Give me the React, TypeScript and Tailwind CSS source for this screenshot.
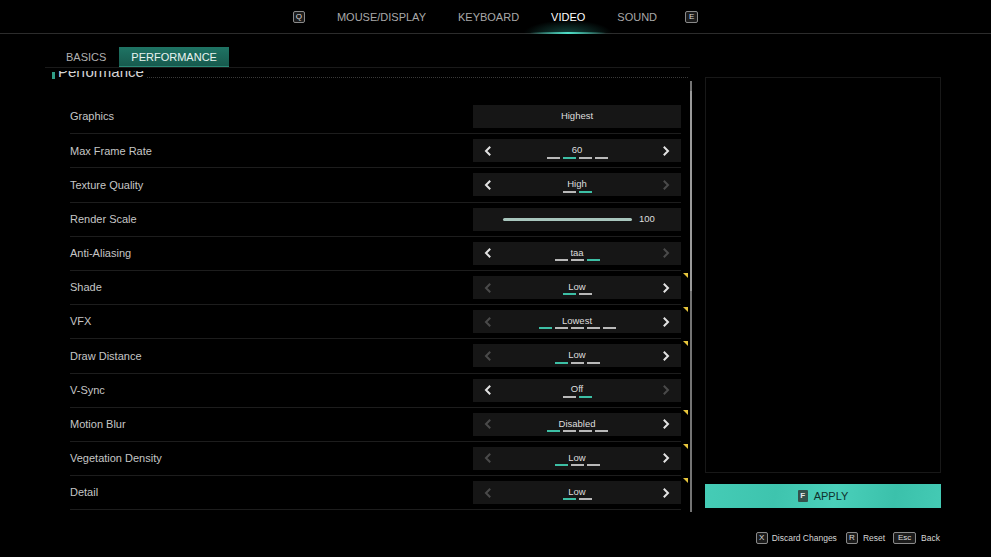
import React from 'react';

type Row = {
  label: string;
  kind: 'plain' | 'select' | 'slider';
  value: string;
  left?: boolean;
  right?: boolean;
  count?: number;
  active?: number;
  flag?: boolean;
};

const rows: Row[] = [
  { label: 'Graphics', kind: 'plain', value: 'Highest' },
  { label: 'Max Frame Rate', kind: 'select', value: '60', left: true, right: true, count: 4, active: 1 },
  { label: 'Texture Quality', kind: 'select', value: 'High', left: true, right: false, count: 2, active: 1 },
  { label: 'Render Scale', kind: 'slider', value: '100' },
  { label: 'Anti-Aliasing', kind: 'select', value: 'taa', left: true, right: false, count: 3, active: 2 },
  { label: 'Shade', kind: 'select', value: 'Low', left: false, right: true, count: 2, active: 0, flag: true },
  { label: 'VFX', kind: 'select', value: 'Lowest', left: false, right: true, count: 5, active: 0, flag: true },
  { label: 'Draw Distance', kind: 'select', value: 'Low', left: false, right: true, count: 3, active: 0, flag: true },
  { label: 'V-Sync', kind: 'select', value: 'Off', left: true, right: false, count: 2, active: 1 },
  { label: 'Motion Blur', kind: 'select', value: 'Disabled', left: false, right: true, count: 4, active: 0, flag: true },
  { label: 'Vegetation Density', kind: 'select', value: 'Low', left: false, right: true, count: 3, active: 0, flag: true },
  { label: 'Detail', kind: 'select', value: 'Low', left: false, right: true, count: 2, active: 0, flag: true },
];

function Chevron({ dir, on }: { dir: 'l' | 'r'; on: boolean }) {
  return (
    <svg width="7" height="10" viewBox="0 0 7 10" className="block">
      <path
        d={dir === 'l' ? 'M5.5 1.5 L2 5 L5.5 8.5' : 'M1.5 1.5 L5 5 L1.5 8.5'}
        fill="none"
        stroke={on ? '#e2e2e2' : '#4a4a4a'}
        strokeWidth="2"
        strokeLinecap="square"
      />
    </svg>
  );
}

function KeyCap({ k, className = '' }: { k: string; className?: string }) {
  return (
    <span
      className={`inline-flex h-[12px] items-center justify-center rounded-[2px] border border-[#8a8a8a] bg-[#1b1b1b] px-[2px] text-[8px] leading-none text-[#dcdcdc] ${className}`}
    >
      {k}
    </span>
  );
}

function Control({ r }: { r: Row }) {
  if (r.kind === 'plain') {
    return (
      <div className="flex h-[23px] w-[208px] items-center justify-center bg-[#161616] text-[9.5px] text-[#dedede]">
        {r.value}
      </div>
    );
  }
  if (r.kind === 'slider') {
    return (
      <div className="flex h-[23px] w-[208px] items-center bg-[#161616] pl-[30px]">
        <div className="h-[3px] w-[129px] rounded-full bg-[#a8c6bd]" />
        <span className="ml-[7px] text-[9.5px] text-[#dedede]">{r.value}</span>
      </div>
    );
  }
  const dashes = Array.from({ length: r.count ?? 0 });
  return (
    <div className="flex h-[23px] w-[208px] items-center justify-between bg-[#161616] px-[11px]">
      <Chevron dir="l" on={!!r.left} />
      <div className="flex flex-col items-center pt-[1px]">
        <span className="text-[9.5px] leading-[11px] text-[#dedede]">{r.value}</span>
        <div className="mt-[1.5px] flex gap-[3px]">
          {dashes.map((_, i) => (
            <span
              key={i}
              className={`block h-[2px] w-[13px] ${i === r.active ? 'bg-[#3dbfa5]' : 'bg-[#b9b9b9]'}`}
            />
          ))}
        </div>
      </div>
      <Chevron dir="r" on={!!r.right} />
    </div>
  );
}

export default function App() {
  const topTabs = ['MOUSE/DISPLAY', 'KEYBOARD', 'VIDEO', 'SOUND'];
  return (
    <div className="relative h-[557px] w-[991px] overflow-hidden bg-black font-['Liberation_Sans',Arial,sans-serif] text-[#c4c4c4]">
      {/* Top tab bar */}
      <header className="flex h-[34px] items-center justify-center gap-[32px] border-b border-[#2c2c2c] pt-[1px]">
        <KeyCap k="Q" className="w-[12px]" />
        {topTabs.map((t) => (
          <div key={t} className="relative flex h-full items-center">
            <span className={`text-[11px] ${t === 'VIDEO' ? 'text-white' : 'text-[#a9a9a9]'}`}>{t}</span>
            {t === 'VIDEO' && (
              <>
                <span className="absolute bottom-[-1px] left-1/2 h-[14px] w-[90px] -translate-x-1/2 bg-[radial-gradient(ellipse_at_bottom,rgba(60,200,180,0.35),rgba(60,200,180,0)_70%)]" />
                <span className="absolute bottom-[-1px] left-1/2 h-[2px] w-[76px] -translate-x-1/2 bg-[linear-gradient(90deg,rgba(70,220,195,0),#4fe0c8_50%,rgba(70,220,195,0))]" />
              </>
            )}
          </div>
        ))}
        <KeyCap k="E" className="ml-[-4px] w-[13px]" />
      </header>

      {/* Sub tabs */}
      <div className="ml-[45px] mt-[13px] flex w-[645px] border-b border-[#1a1a1a] pl-[9px]">
        <div className="flex h-[20px] items-center px-[12px] pt-[1px] text-[11px] text-[#b0b0b0]">BASICS</div>
        <div className="ml-[1px] flex h-[20px] items-center border-b border-[#2a8a78] bg-[linear-gradient(180deg,#1f7464,#175a4e)] px-[12px] pt-[1px] text-[11px] text-[#e8f3f0]">
          PERFORMANCE
        </div>
      </div>

      {/* Main area */}
      <div className="flex">
        {/* Left column */}
        <div className="relative ml-[45px] h-[444px] w-[648px]">
          <div className="mt-[3px] h-[441px] w-[643px] overflow-hidden">
            {/* Section heading (partly scrolled off) */}
            <div className="relative flex h-[29px] items-start">
              <span className="ml-[7px] mt-[1px] h-[7px] w-[3px] bg-[#2f9d87]" />
              <span className="ml-[3px] -mt-[7px] text-[15px] leading-[15px] text-[#d4d4d4]">Performance</span>
              <span className="ml-[3px] mt-[6px] h-0 flex-1 border-t border-dotted border-[#3a3a3a]" />
            </div>
            {/* Rows */}
            <div className="flex flex-col pl-[25px] pr-[7px]">
              {rows.map((r) => (
                <div key={r.label} className="relative flex h-[34.2px] items-center justify-between border-b border-[#1d1d1d]">
                  <span className="text-[11px] text-[#c6c6c6]">{r.label}</span>
                  <Control r={r} />
                  {r.flag && (
                    <svg width="5" height="5" viewBox="0 0 5 5" className="absolute right-[-7px] top-[2px]">
                      <path d="M0 0 H5 V5 Z" fill="#e5c43c" />
                    </svg>
                  )}
                </div>
              ))}
            </div>
          </div>
          {/* Scrollbar */}
          <div className="absolute left-[645px] top-[13px] h-[431px] w-[2px] bg-[#747474]">
            <div className="mt-[10px] h-[200px] w-[2px] bg-[#9a9a9a]" />
          </div>
        </div>

        {/* Right column */}
        <div className="ml-[12px] mt-[9px] flex w-[236px] flex-col">
          <div className="h-[396px] border border-[#181818]" />
          <button className="mt-[11px] flex h-[24px] items-center justify-center gap-[6px] bg-[linear-gradient(100deg,#45ccb6_0%,#3ec4ae_30%,#4ad0ba_55%,#3bc1ab_80%,#44cab4_100%)]">
            <span className="flex h-[12px] w-[10px] items-center justify-center rounded-[1px] bg-[#34504b] text-[8px] font-bold text-[#e6e6e6]">F</span>
            <span className="text-[11px] text-[#10312c]">APPLY</span>
          </button>
        </div>
      </div>

      {/* Bottom hints */}
      <div className="mt-[20px] flex items-center justify-end pr-[51px] text-[8.5px] text-[#d6d6d6]">
        <KeyCap k="X" className="w-[12px]" />
        <span className="ml-[4px] mr-[9px]">Discard Changes</span>
        <KeyCap k="R" className="w-[12px]" />
        <span className="ml-[5px] mr-[8px]">Reset</span>
        <KeyCap k="Esc" className="w-[23px]" />
        <span className="ml-[5px]">Back</span>
      </div>
    </div>
  );
}
